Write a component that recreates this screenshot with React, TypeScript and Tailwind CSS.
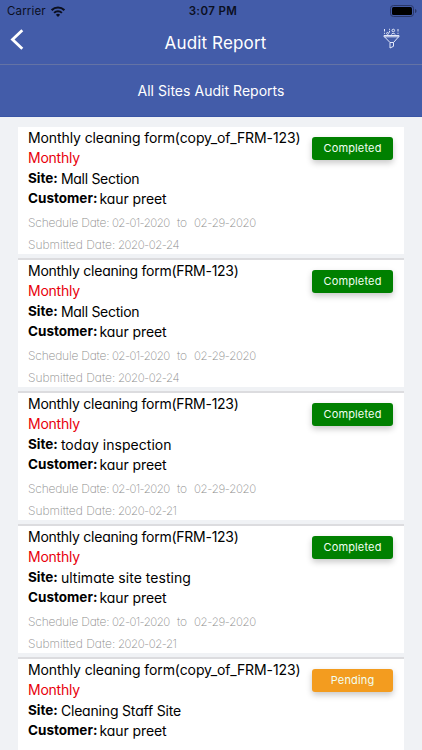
import React from "react";

type Report = {
  title: string;
  titleClass: string;
  site: string;
  siteClass: string;
  submitted?: string;
  status: "Completed" | "Pending";
};

const COPY_TITLE = "Monthly cleaning form(copy_of_FRM-123)";
const FORM_TITLE = "Monthly cleaning form(FRM-123)";

const reports: Report[] = [
  {
    title: COPY_TITLE,
    titleClass: "tracking-[-0.1px]",
    site: "Mall Section",
    siteClass: "tracking-[-0.28px]",
    submitted: "2020-02-24",
    status: "Completed",
  },
  {
    title: FORM_TITLE,
    titleClass: "tracking-[-0.26px]",
    site: "Mall Section",
    siteClass: "tracking-[-0.28px]",
    submitted: "2020-02-24",
    status: "Completed",
  },
  {
    title: FORM_TITLE,
    titleClass: "tracking-[-0.26px]",
    site: "today inspection",
    siteClass: "tracking-[0.03px]",
    submitted: "2020-02-21",
    status: "Completed",
  },
  {
    title: FORM_TITLE,
    titleClass: "tracking-[-0.26px]",
    site: "ultimate site testing",
    siteClass: "tracking-[0.03px]",
    submitted: "2020-02-21",
    status: "Completed",
  },
  {
    title: COPY_TITLE,
    titleClass: "tracking-[-0.1px]",
    site: "Cleaning Staff Site",
    siteClass: "tracking-[-0.18px]",
    status: "Pending",
  },
];

const StatusBar: React.FC = () => {
  return (
    <div className="grid h-[22px] grid-cols-3 items-center pl-[7px] pr-[5px] text-[#0b0f1f]">
      <div className="flex items-center gap-[5px] pt-px">
        <span className="text-[11.5px] leading-none tracking-[0.15px]">Carrier</span>
        <svg className="h-[11px] w-[14px]" viewBox="0 0 14 11" fill="none">
          <path d="M0.600 4.200a9 9 0 0112.800 0" stroke="currentColor" strokeWidth="2.100" />
          <path d="M3.100 6.900a5.400 5.400 0 017.800 0" stroke="currentColor" strokeWidth="1.900" />
          <path d="M7 10.900L4.900 8.800a3 3 0 014.200 0z" fill="currentColor" />
        </svg>
      </div>
      <span className="pl-[2px] pt-[2px] text-center text-[11.5px] font-semibold leading-none tracking-[0.4px]">
        3:07 PM
      </span>
      <svg className="h-[12px] w-[27px] justify-self-end" viewBox="0 0 27 12">
        <rect x="0.5" y="0.5" width="23" height="11" rx="3" fill="none" stroke="#2a3768" />
        <rect x="2" y="2" width="20" height="8" rx="1.5" fill="#000" />
        <path d="M25 4v4c1-.3 1.500-1 1.500-2S26 4.300 25 4z" fill="#2a3768" />
      </svg>
    </div>
  );
};

const Header: React.FC = () => {
  return (
    <header className="bg-[#435ca9]">
      <StatusBar />

      {/* Title row */}
      <div className="flex h-[43px] items-start border-b border-[#6473a5] pl-[10px] pr-[22px]">
        <button className="mt-[7px] w-[17px]">
          <svg className="h-[21px] w-[14px]" viewBox="0 0 14 21" fill="none">
            <path d="M12.300 1.200L2.500 10.500l9.800 9.300" stroke="#fff" strokeWidth="2.800" />
          </svg>
        </button>
        <h1 className="mt-[9px] flex-1 pl-[21px] text-center text-[17px] leading-[24px] tracking-[0.15px] text-white [font-feature-settings:'cv11']">
          Audit Report
        </h1>
        <button className="mt-[6px]">
          <svg
            className="h-[21px] w-[17px]"
            viewBox="0 0 17 21"
            fill="none"
            stroke="#e4e9fa"
            strokeWidth="1"
          >
            <path d="M1.500 1v2.500M1.500 4.800v1M6.500 0.800v1M6.500 2.800v1.700M15 1v2.500M15 4.800v1" />
            <circle cx="10.300" cy="2.500" r="1.300" />
            <circle cx="4.600" cy="5.400" r="1" />
            <path d="M8.500 6.500c0-1.500 3.600-1.500 3.600 0" />
            <path d="M1 7.500h15v1.300H1zM1.600 8.900l5.400 5.600v5.500l3.500-1.700v-3.800l5-5.600M7 14.500h3.500" />
          </svg>
        </button>
      </div>

      {/* Sub header */}
      <div className="flex h-[52px] items-center justify-center border-b border-[#3a55a5]">
        <span className="text-[14px] leading-none tracking-[0.03px] text-white">
          All Sites Audit Reports
        </span>
      </div>
    </header>
  );
};

const ReportCard: React.FC<{ report: Report; first: boolean }> = ({ report, first }) => {
  return (
    <li className={`h-[133px] border-t-2 ${first ? "border-transparent" : "border-[#dcdcdf]"}`}>
      <div className="flex h-[127px] items-start justify-between bg-white pl-[10px] pr-[11px] pt-px text-[14px] text-black [font-feature-settings:'cv11']">
        <div className="whitespace-nowrap">
          <p className={`leading-[20px] ${report.titleClass}`}>{report.title}</p>
          <p className="leading-[20px] tracking-[-0.25px] text-[#e8000c]">Monthly</p>
          <p className="flex gap-[3px] leading-[20px]">
            <span className="text-[13.5px] font-bold tracking-[0px]">Site:</span>
            <span className={`pt-px ${report.siteClass}`}>{report.site}</span>
          </p>
          <p className="-mt-px flex gap-[2px] leading-[20px]">
            <span className="text-[13.5px] font-bold tracking-[0px]">Customer:</span>
            <span className="pt-px tracking-[-0.08px]">kaur preet</span>
          </p>
          {report.submitted && (
            <div className="mt-[3px] text-[12px] font-extralight leading-[22px] text-[#8c8c8c]">
              <p className="flex">
                <span className="w-[84px] tracking-[-0.2px]">Schedule Date:</span>
                <span className="w-[65px] text-[11.5px] tracking-[-0.58px]">02-01-2020</span>
                <span className="w-[17px] tracking-[-0.2px]">to</span>
                <span className="text-[11.5px] tracking-[-0.35px]">02-29-2020</span>
              </p>
              <p className="flex">
                <span className="w-[90px] tracking-[0px]">Submitted Date:</span>
                <span className="text-[11.5px] tracking-[-0.5px]">{report.submitted}</span>
              </p>
            </div>
          )}
        </div>
        <span
          className={`mt-[9px] flex h-[23px] w-[81px] shrink-0 items-center justify-center rounded-[3px] text-[11px] tracking-[0.15px] text-[#f1fff1] shadow-[0_3px_6px_rgba(0,0,0,0.22)] [font-feature-settings:normal] ${
            report.status === "Completed" ? "bg-[#008000]" : "bg-[#f39c1f]"
          }`}
        >
          {report.status}
        </span>
      </div>
    </li>
  );
};

const App: React.FC = () => {
  return (
    <div className="h-[750px] w-[422px] overflow-hidden bg-[#f0f2f5] font-['Inter','Liberation_Sans',sans-serif]">
      <Header />
      <ul className="px-[18px] pt-[8px]">
        {reports.map((report, index) => (
          <ReportCard key={index} report={report} first={index === 0} />
        ))}
      </ul>
    </div>
  );
};

export default App;
